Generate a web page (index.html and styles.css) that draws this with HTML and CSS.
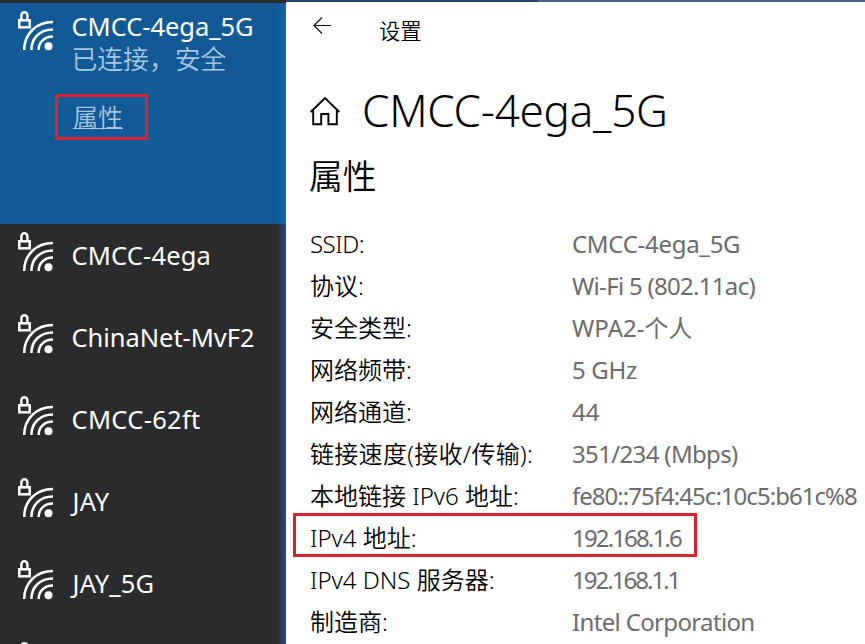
FILE: index.html
```html
<!DOCTYPE html>
<html lang="zh-CN">
<head>
<meta charset="utf-8">
<title>设置</title>
<link rel="stylesheet" href="styles.css">
</head>
<body>
<svg width="0" height="0" class="defs">
  <symbol id="wifi" viewBox="0 0 36 40">
    <g fill="none" stroke="#fff">
      <rect x="1.300" y="9.300" width="10.400" height="7" stroke-width="2.500"/>
      <path d="M3.400 9V4.200a3 3 0 0 1 6 0V9" stroke-width="2.400"/>
      <g stroke-width="2.500">
        <path d="M6.200 39C6.200 23 18 11 35 11"/>
        <path d="M13.400 39C13.400 27 22 18.500 35 18.500"/>
        <path d="M20.600 39C20.600 31 26.500 25.600 35 25.600"/>
      </g>
    </g>
    <circle cx="30.500" cy="35.200" r="4" fill="#fff"/>
  </symbol>
</svg>
<div class="app">
  <aside class="networks">
    <section class="network active">
      <svg class="wifi"><use href="#wifi"/></svg>
      <div class="info">
        <div class="name">CMCC-4ega_5G</div>
        <div class="status">已连接，安全</div>
        <a class="props">属性</a>
      </div>
    </section>
    <section class="network"><svg class="wifi"><use href="#wifi"/></svg><div class="name wide">CMCC-4ega</div></section>
    <section class="network"><svg class="wifi"><use href="#wifi"/></svg><div class="name">ChinaNet-MvF2</div></section>
    <section class="network"><svg class="wifi"><use href="#wifi"/></svg><div class="name wider">CMCC-62ft</div></section>
    <section class="network"><svg class="wifi"><use href="#wifi"/></svg><div class="name jay">JAY</div></section>
    <section class="network"><svg class="wifi"><use href="#wifi"/></svg><div class="name jay">JAY_5G</div></section>
    <section class="network"><svg class="wifi"><use href="#wifi"/></svg></section>
  </aside>
  <main class="settings">
    <header class="bar">
      <svg class="back" viewBox="0 0 18 18"><path d="M18 8.500H1M9 .5L1 8.500l8 8" fill="none" stroke="#111" stroke-width="1.200"/></svg>
      <span>设置</span>
    </header>
    <div class="title">
      <svg class="home" viewBox="0 0 30 30"><path d="M.7 16L15 2l14.300 14M3.200 14v14.200h8V18h7.200v10.200h8.400V14" fill="none" stroke="#000" stroke-width="1.900"/></svg>
      <h1>CMCC-4ega_5G</h1>
    </div>
    <h2>属性</h2>
    <dl class="details">
      <div class="row"><dt class="ssid-label">SSID:</dt><dd class="ssid">CMCC-4ega_5G</dd></div>
      <div class="row"><dt>协议:</dt><dd class="protocol">Wi-Fi 5 (802.11ac)</dd></div>
      <div class="row"><dt>安全类型:</dt><dd>WPA2-个人</dd></div>
      <div class="row"><dt>网络频带:</dt><dd class="ssid">5 GHz</dd></div>
      <div class="row"><dt>网络通道:</dt><dd>44</dd></div>
      <div class="row"><dt class="speed-label">链接速度(接收/传输):</dt><dd class="speed">351/234 (Mbps)</dd></div>
      <div class="row"><dt>本地链接 IPv6 地址:</dt><dd class="ipv6">fe80::75f4:45c:10c5:b61c%8</dd></div>
      <div class="row marked"><dt>IPv4 地址:</dt><dd class="ipv4">192.168.1.6</dd></div>
      <div class="row"><dt>IPv4 DNS 服务器:</dt><dd class="dns">192.168.1.1</dd></div>
      <div class="row"><dt>制造商:</dt><dd class="speed">Intel Corporation</dd></div>
    </dl>
  </main>
</div>
</body>
</html>
```
FILE: styles.css
```css
*, *::before { box-sizing: border-box; }
body { margin: 0; overflow: hidden; background: #fff; font-family: "Noto Sans", "Noto Sans CJK SC", sans-serif; }
.defs { display: block; height: 0; }
.app { display: flex; width: 865px; height: 644px; overflow: hidden; }

.networks { width: 286px; height: 644px; flex: none; overflow: hidden; border-top: 3px solid #2b2b2c;
  background: linear-gradient(90deg, transparent 278px, #1e4d86 286px), #2b2b2d; color: #fff; }
.network { display: flex; height: 82px; padding: 8px 0 0 18px; }
.network.active { height: 221px; background: linear-gradient(90deg, #125a95 276px, #1763b0 286px); }
.wifi { width: 36px; height: 40px; flex: none; margin-right: 17.500px; }
.name { height: 34px; line-height: 34px; font-size: 25.500px; letter-spacing: -.05px; white-space: nowrap; margin-top: 6px; }
.name.wide { letter-spacing: .15px; }
.name.wider { letter-spacing: .3px; }
.name.jay { padding-left: 1px; letter-spacing: .2px; }
.active .name { margin-top: -2px; }
.status { height: 30px; line-height: 30px; margin-top: 1px; font-size: 25.800px; font-weight: 350; color: #a6c6e2; white-space: nowrap; }
.props { display: block; width: 93px; height: 46px; margin: 20px 0 0 -16.500px; padding-left: 15px; border: 3px solid #d8232e;
  line-height: 40px; font-size: 25px; font-weight: 350; color: #a6c6e2; text-decoration: underline; text-decoration-thickness: 1px; text-underline-offset: 1px; }

.settings { flex: 1; height: 644px; padding-left: 24px; border-top: 2px solid;
  border-image: linear-gradient(90deg, #23446f 252px, #47658f 252px) 2; border-width: 2px 0 0; color: #000; }
.bar { display: flex; height: 56px; padding-top: 15px; }
.back { width: 18px; height: 18px; margin: 0 48px 0 3px; }
.bar span { font-size: 21.300px; line-height: 28px; font-weight: 350; }
.title { display: flex; height: 100px; padding-top: 3px; align-items: center; }
.home { width: 30px; height: 30px; margin: 3px 22px 0 0; }
h1 { margin: 0; font-size: 44px; line-height: 60px; font-weight: 300; letter-spacing: -.25px; white-space: nowrap; }
h2 { margin: 0 0 0 -1px; font-size: 33.800px; line-height: 36px; height: 65px; font-weight: 350; }
.details { margin: 0; }
.row { display: flex; height: 42px; line-height: 42px; font-size: 24px; font-weight: 350; white-space: nowrap; }
dt { width: 262px; flex: none; }
dd { margin: 0; color: #6c6c6c; font-weight: 400; }
.ssid-label { letter-spacing: -.5px; }
.speed-label { letter-spacing: .3px; }
.ssid { letter-spacing: -.3px; }
.protocol { letter-spacing: -.7px; }
.speed { letter-spacing: -.65px; }
.ipv6 { letter-spacing: -.970px; }
.ipv4 { letter-spacing: -1.850px; }
.dns { letter-spacing: -1.980px; }
.marked { position: relative; }
.marked::before { content: ""; position: absolute; left: -17px; top: -4px; width: 404px; height: 44px; border: 3px solid #d8232e; }
```
